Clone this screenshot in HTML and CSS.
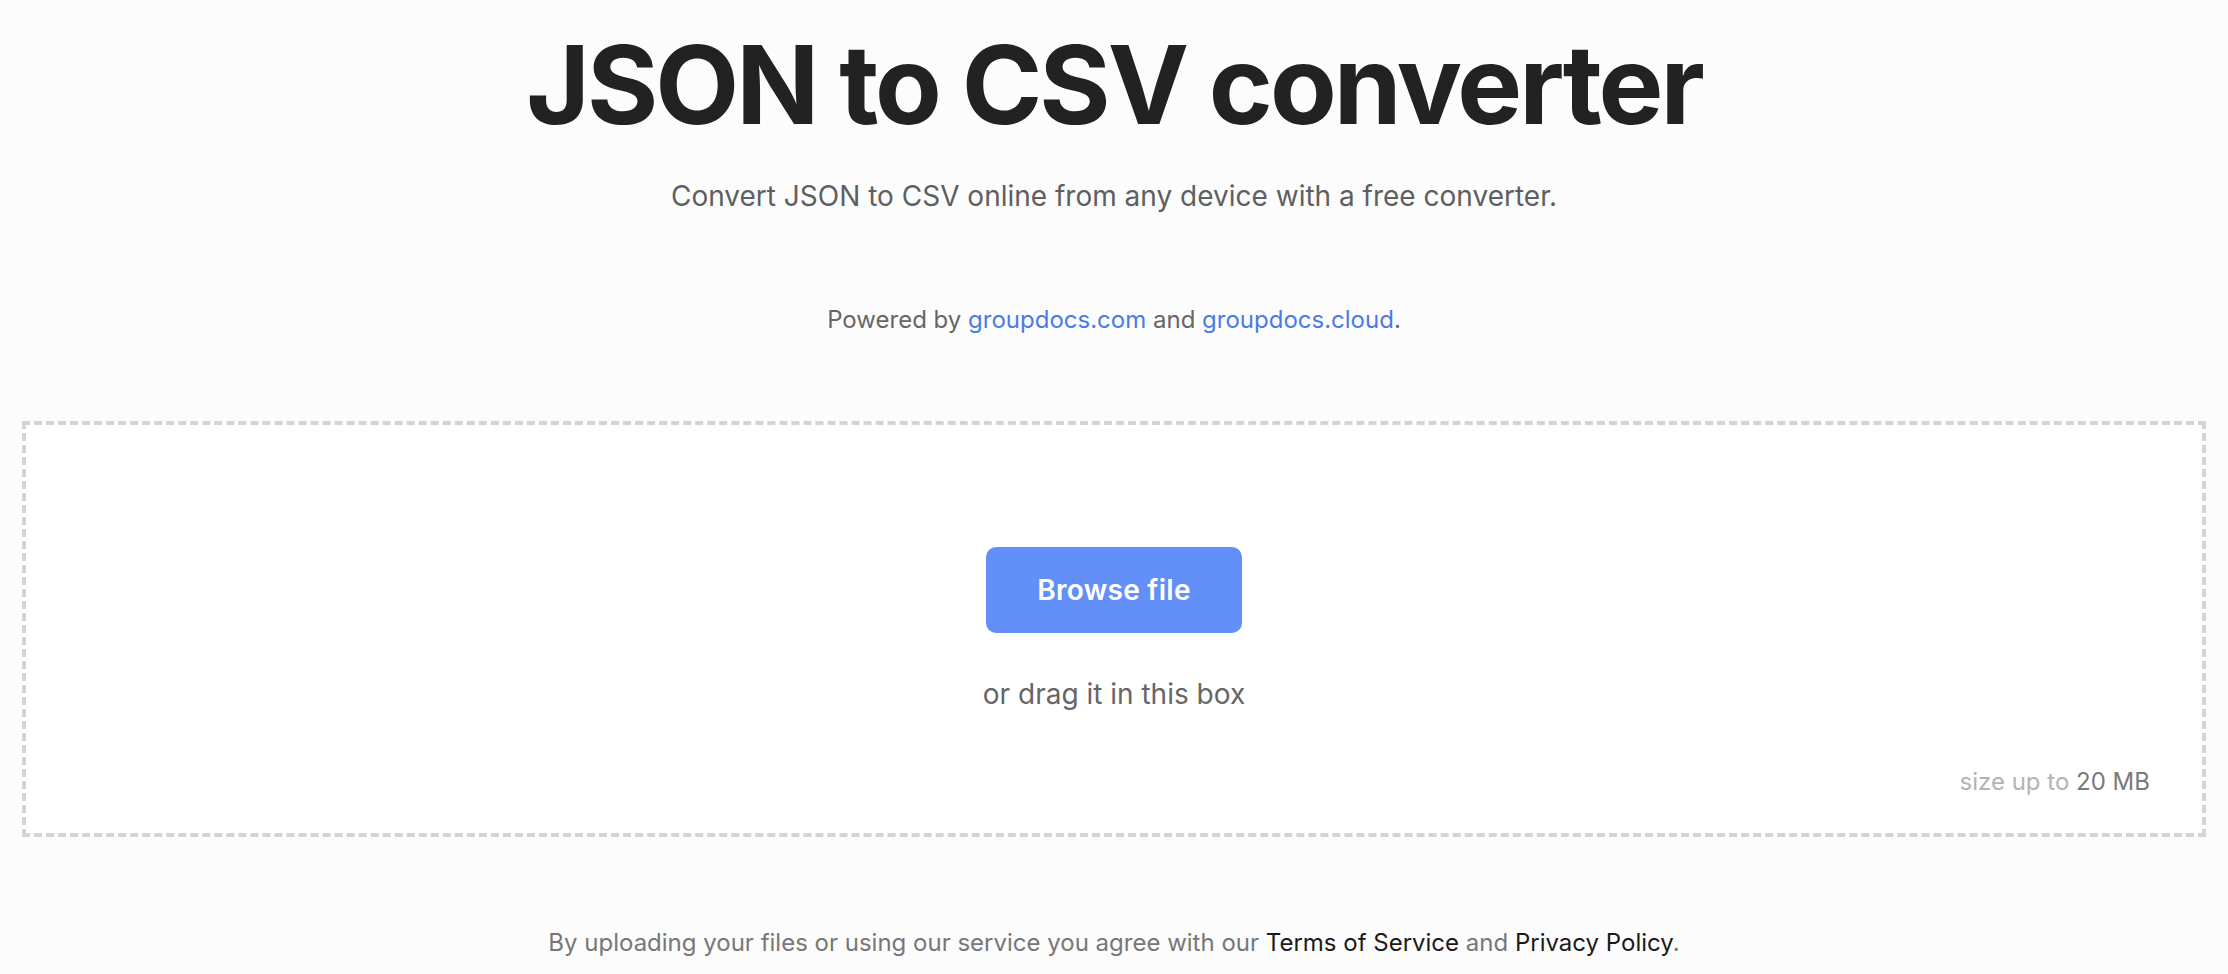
FILE: index.html
```html
<!DOCTYPE html>
<html lang="en">
<head>
<meta charset="utf-8">
<title>JSON to CSV converter</title>
<link rel="stylesheet" href="styles.css">
</head>
<body>
<main class="page">
  <h1 class="title">JSON to CSV converter</h1>
  <p class="subtitle">Convert JSON to CSV online from any device with a free converter.</p>
  <p class="powered">Powered by <a class="link" href="#">groupdocs.com</a> and <a class="link" href="#">groupdocs.cloud</a>.</p>
  <section class="dropzone">
    <button class="browse" type="button">Browse file</button>
    <p class="drag">or drag it in this box</p>
    <p class="size">size up to <span class="size-value">20 MB</span></p>
  </section>
  <p class="terms">By uploading your files or using our service you agree with our <a class="terms-link" href="#">Terms of Service</a> and <a class="terms-link" href="#">Privacy Policy</a>.</p>
</main>
</body>
</html>
```

FILE: styles.css
```css
html, body {
  margin: 0;
  padding: 0;
  background: #fcfcfc;
}
body {
  font-family: Inter, "Noto Sans", "Liberation Sans", sans-serif;
  color: #222;
}
.page {
  display: flex;
  flex-direction: column;
  align-items: center;
  padding: 0 22px;
}
.title {
  margin: 19px 0 0;
  font-size: 109px;
  line-height: 131px;
  font-weight: 700;
  color: #222;
  letter-spacing: -3px;
}
.subtitle {
  margin: 26px 0 0;
  font-size: 28px;
  line-height: 40px;
  color: #5f5f5f;
}
.powered {
  margin: 88px 0 0;
  font-size: 24px;
  line-height: 32px;
  color: #666;
}
.link {
  color: #4a7be6;
  text-decoration: none;
}
.dropzone {
  margin-top: 85px;
  align-self: stretch;
  box-sizing: border-box;
  height: 416px;
  border: 4px dashed #d4d4d4;
  background: #fff;
  display: flex;
  flex-direction: column;
  align-items: center;
  padding: 122px 52px 0;
}
.browse {
  height: 86px;
  padding: 0 51px;
  border: none;
  border-radius: 10px;
  background: #6390f8;
  color: #fff;
  font-family: inherit;
  font-size: 28px;
  font-weight: 600;
  letter-spacing: 0.3px;
  cursor: pointer;
}
.drag {
  margin: 43px 0 0;
  font-size: 28px;
  line-height: 36px;
  color: #666;
}
.size {
  align-self: flex-end;
  margin: 54px 0 0;
  font-size: 24px;
  line-height: 32px;
  color: #b3b3b3;
}
.size-value {
  color: #7a7a7a;
}
.terms {
  margin: 90px 0 0;
  font-size: 24px;
  line-height: 32px;
  color: #777;
}
.terms-link {
  color: #1a1a1a;
  text-decoration: none;
}
```
